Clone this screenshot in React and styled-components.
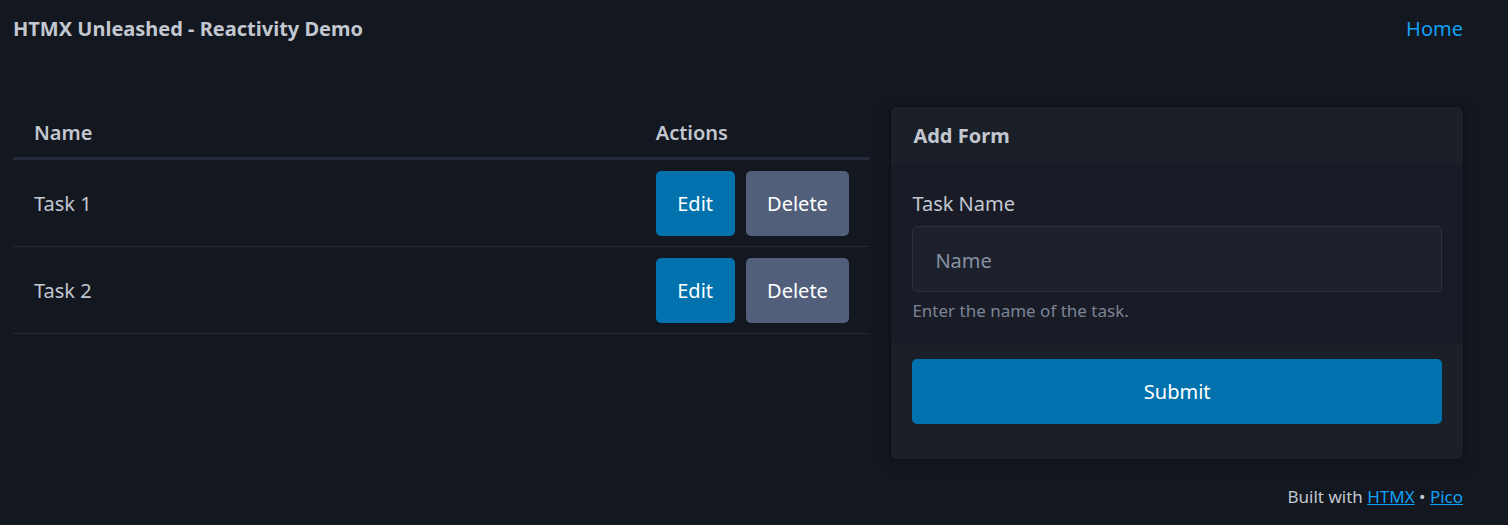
import React from 'react';
import styled, { createGlobalStyle } from 'styled-components';

const GlobalStyle = createGlobalStyle`
  html, body {
    margin: 0;
    padding: 0;
    background: #13171f;
    color: #c2c7d0;
    font-family: 'Segoe UI', 'Noto Sans', 'Open Sans', sans-serif;
    font-size: 20px;
    line-height: 1.5;
  }
  * { box-sizing: border-box; }
`;

const Page = styled.div`
  width: 1508px;
  height: 525px;
  padding: 0 45px 0 13px;
  display: flex;
  flex-direction: column;
`;

const Nav = styled.nav`
  height: 57px;
  display: flex;
  align-items: center;
  justify-content: space-between;
`;

const Brand = styled.strong`
  font-size: 20px;
  font-weight: 700;
  color: #c2c7d0;
`;

const NavLink = styled.a`
  color: #0fa0f5;
  text-decoration: none;
  font-size: 20px;
`;

const Main = styled.main`
  margin-top: 50px;
  display: grid;
  grid-template-columns: 3fr 2fr;
  gap: 21px;
  align-items: start;
`;

const Table = styled.table`
  width: 100%;
  border-collapse: collapse;
`;

const Th = styled.th`
  text-align: left;
  font-weight: 600;
  padding: 11px 21px 9px;
  border-bottom: 3px solid #232936;
`;

const Td = styled.td`
  padding: 11px 21px 10px;
  border-bottom: 1px solid #232936;
  width: ${(p) => (p.$shrink ? '1%' : 'auto')};
  white-space: nowrap;
`;

const Actions = styled.div`
  display: flex;
  gap: 11px;
`;

const Button = styled.button`
  font-family: inherit;
  font-size: 20px;
  line-height: 30px;
  color: #fff;
  border: none;
  border-radius: 5px;
  padding: 18px ${(p) => (p.$wide ? '0' : '21.5px')} 17px;
  width: ${(p) => (p.$wide ? '100%' : 'auto')};
  background: ${(p) => (p.$secondary ? '#525f7a' : '#0172ad')};
  cursor: pointer;
`;

const Card = styled.article`
  background: #191c26;
  border-radius: 6px;
  overflow: hidden;
  box-shadow: 0 0 2px rgba(7, 9, 12, 0.5), 0 4px 14px rgba(7, 9, 12, 0.35);
`;

const CardHeader = styled.header`
  background: #1a1f28;
  padding: 14px 22px 12px;
  font-weight: 700;
  height: 56px;
`;

const CardBody = styled.div`
  padding: 26px 21px 0;
  height: 180px;
`;

const Label = styled.label`
  display: block;
  margin-bottom: 7px;
`;

const Input = styled.input`
  display: block;
  width: 100%;
  height: 66px;
  padding: 2px 22px 0;
  font-family: inherit;
  font-size: 20px;
  color: #c2c7d0;
  background: #1c212c;
  border: 1px solid #2a3140;
  border-radius: 5px;
  outline: none;
  &::placeholder { color: #8891a4; }
`;

const Help = styled.small`
  display: block;
  margin-top: 7px;
  font-size: 17px;
  line-height: 24px;
  color: #7b8495;
`;

const CardFooter = styled.footer`
  background: #1a1f28;
  padding: 16px 21px 35px;
`;

const Footer = styled.footer`
  margin-top: 25px;
  text-align: right;
  font-size: 17px;
  a { color: #0fa0f5; }
`;

const tasks = [
  { id: 1, name: 'Task 1' },
  { id: 2, name: 'Task 2' },
];

export default function App() {
  return (
    <Page>
      <GlobalStyle />
      <Nav>
        <Brand>HTMX Unleashed - Reactivity Demo</Brand>
        <NavLink href="#">Home</NavLink>
      </Nav>
      <Main>
        <Table>
          <thead>
            <tr>
              <Th>Name</Th>
              <Th>Actions</Th>
            </tr>
          </thead>
          <tbody>
            {tasks.map((t) => (
              <tr key={t.id}>
                <Td>{t.name}</Td>
                <Td $shrink>
                  <Actions>
                    <Button>Edit</Button>
                    <Button $secondary>Delete</Button>
                  </Actions>
                </Td>
              </tr>
            ))}
          </tbody>
        </Table>
        <Card>
          <CardHeader>Add Form</CardHeader>
          <CardBody>
            <Label>Task Name</Label>
            <Input placeholder="Name" />
            <Help>Enter the name of the task.</Help>
          </CardBody>
          <CardFooter>
            <Button $wide>Submit</Button>
          </CardFooter>
        </Card>
      </Main>
      <Footer>
        Built with <a href="#">HTMX</a> • <a href="#">Pico</a>
      </Footer>
    </Page>
  );
}
